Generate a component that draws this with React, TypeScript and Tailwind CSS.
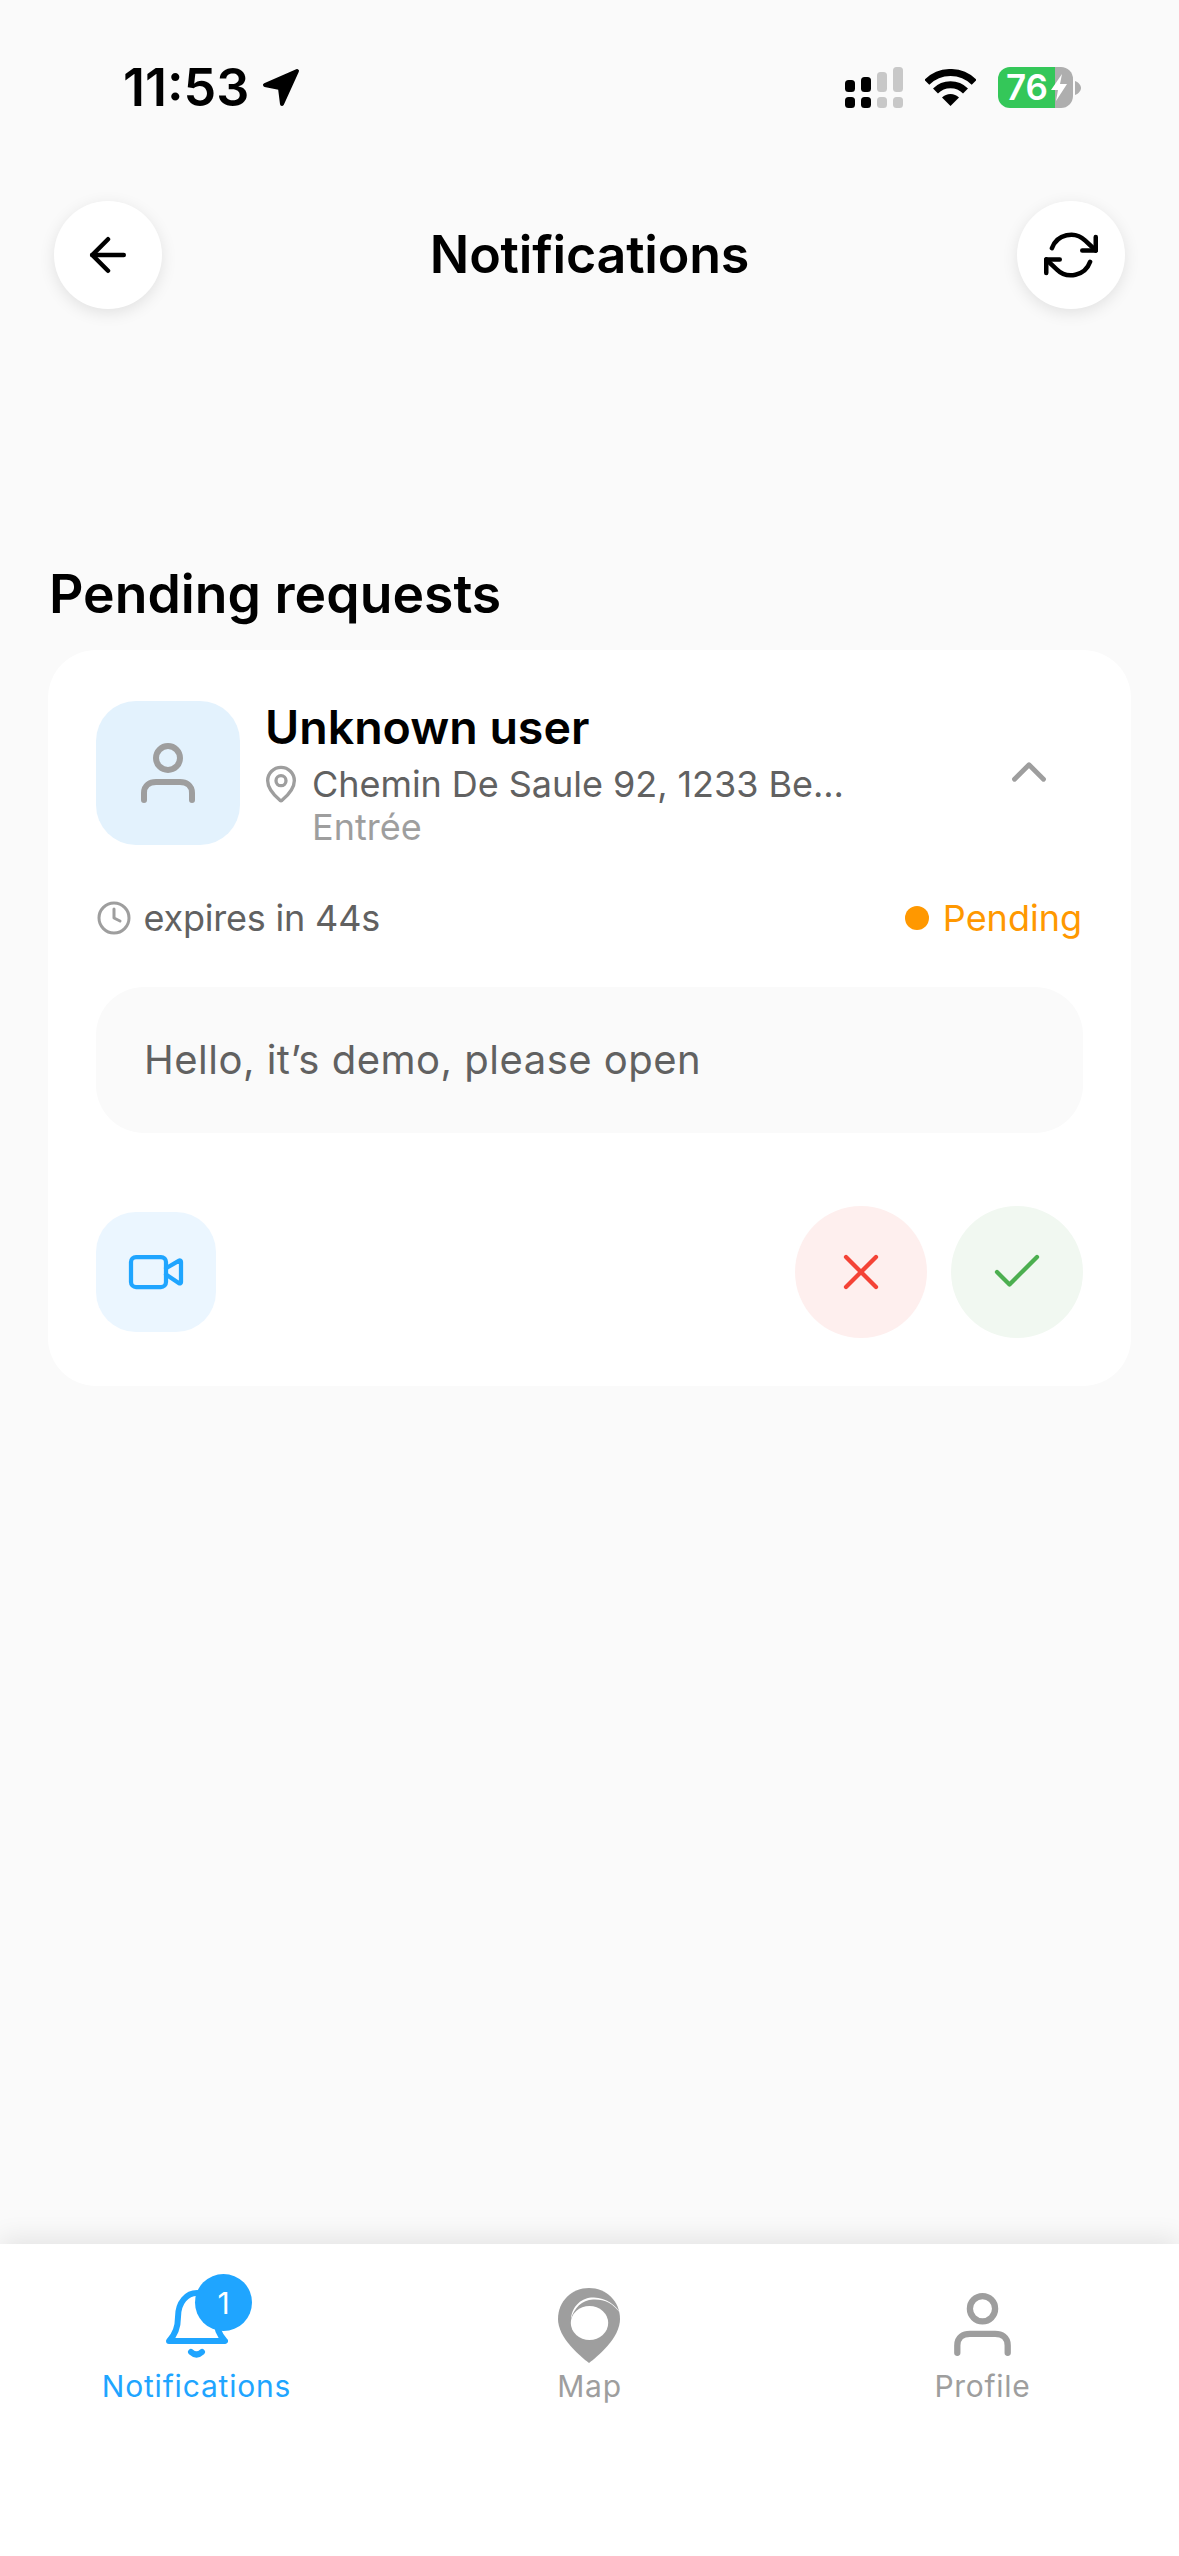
import { ArrowLeft, Check, ChevronUp, Clock, MapPin, Video, X } from 'lucide-react'
import { FiRefreshCw } from 'react-icons/fi'

function PersonIcon({ className }: { className: string }) {
  return (
    <svg viewBox="0 0 54 60" fill="none" stroke="currentColor" strokeWidth="6" strokeLinecap="round" className={className}>
      <circle cx="27" cy="15" r="12" />
      <path d="M3 57V50C3 42 9 39 15 39H39C45 39 51 42 51 50V57" />
    </svg>
  )
}

function StatusBar() {
  return (
    <div className="flex items-center justify-between pt-[67px] pl-[123px] pr-[98px] h-[108px]">
      <div className="flex items-center gap-[13px]">
        <span className="text-[52px] leading-[41px] font-semibold text-black">11:53</span>
        <svg viewBox="0 0 38 39" className="w-[38px] h-[39px]">
          <path d="M35 3 L3 17 L18 20 L20 36 Z" fill="#000" stroke="#000" strokeWidth="4" strokeLinejoin="round" />
        </svg>
      </div>
      <div className="flex items-center">
        <svg viewBox="0 0 58 41" className="w-[58px] h-[41px]">
          <rect x="0" y="13" width="10" height="12" rx="3.5" fill="#000" />
          <rect x="16" y="10" width="10" height="15" rx="3.5" fill="#000" />
          <rect x="32" y="5" width="10" height="20" rx="3.5" fill="#c8c8c8" />
          <rect x="48" y="0" width="10" height="25" rx="3.5" fill="#c8c8c8" />
          <rect x="0" y="30" width="10" height="11" rx="3.5" fill="#000" />
          <rect x="16" y="30" width="10" height="11" rx="3.5" fill="#000" />
          <rect x="32" y="30" width="10" height="11" rx="3.5" fill="#c8c8c8" />
          <rect x="48" y="30" width="10" height="11" rx="3.5" fill="#c8c8c8" />
        </svg>
        <svg viewBox="0 0 51 37" className="w-[51px] h-[37px] ml-[22px]" fill="none" stroke="#000" strokeWidth="7">
          <path d="M1.8 13.3A33.5 33.5 0 0 1 49.2 13.3" />
          <path d="M10.5 22A21.25 21.25 0 0 1 40.5 22" />
          <path d="M25.5 37L17 28.5A12 12 0 0 1 34 28.5Z" fill="#000" stroke="none" />
        </svg>
        <div className="relative flex w-[75px] h-[41px] ml-[22px]">
          <div className="h-full w-[57px] rounded-l-[12px] bg-[#34c759]" />
          <div className="h-full w-[18px] rounded-r-[12px] bg-[#aeaeae]" />
          <span className="absolute left-[8px] top-0 text-[35px] leading-[41px] font-semibold text-white">76</span>
          <svg viewBox="0 0 16 27" className="absolute left-[53px] top-[7px] w-[16px] h-[27px]">
            <path d="M11 0L0 16H7L5 27L16 10H9Z" fill="#fff" />
          </svg>
        </div>
        <svg viewBox="0 0 6 14" className="w-[6px] h-[14px] ml-[2px]">
          <path d="M0 0C3 1 6 4 6 7C6 10 3 13 0 14Z" fill="#aeaeae" />
        </svg>
      </div>
    </div>
  )
}

function RoundButton({ children }: { children: React.ReactNode }) {
  return (
    <button className="w-[108px] h-[108px] rounded-full bg-white flex items-center justify-center text-black shadow-[0_4px_16px_rgba(0,0,0,0.1)]">
      {children}
    </button>
  )
}

function RequestCard() {
  return (
    <div className="mx-[48px] h-[736px] rounded-[48px] bg-white px-[48px] pt-[51px]">
      <div className="flex">
        <div className="w-[144px] h-[144px] shrink-0 rounded-[40px] bg-[#e3f2fd] flex items-center justify-center text-[#9e9e9e]">
          <PersonIcon className="w-[54px] h-[60px]" />
        </div>
        <div className="ml-[25px] flex-1 min-w-0 pt-[2px]">
          <div className="text-[46.5px] leading-[48px] font-semibold text-black">Unknown user</div>
          <div className="flex items-center mt-[11px] h-[44px]">
            <MapPin size={40} strokeWidth={2} className="shrink-0 text-[#9e9e9e] -ml-[4px]" />
            <span className="ml-[11px] whitespace-nowrap text-[36px] leading-[44px] tracking-[-0.05px] text-[#616161]">Chemin De Saule 92, 1233 Be...</span>
          </div>
          <div className="ml-[47px] mt-[1px] text-[36px] leading-[40px] text-[#9e9e9e]">Entrée</div>
        </div>
        <ChevronUp size={58} strokeWidth={2} className="shrink-0 text-[#9e9e9e] mr-[25px] mt-[42px]" />
      </div>

      <div className="flex items-center justify-between mt-[47px] h-[48px]">
        <div className="flex items-center">
          <Clock size={36} strokeWidth={2} className="text-[#9e9e9e] -ml-[0.5px]" />
          <span className="ml-[12px] text-[36px] leading-[48px] tracking-[-0.2px] text-[#616161]">expires in 44s</span>
        </div>
        <div className="flex items-center mr-[1px]">
          <span className="w-[24px] h-[24px] rounded-full bg-[#ff9800]" />
          <span className="ml-[14px] text-[36px] leading-[48px] text-[#ff9800]">Pending</span>
        </div>
      </div>

      <div className="mt-[45px] h-[146px] rounded-[48px] bg-[#fafafa] flex items-center pl-[48px]">
        <span className="text-[40px] leading-[48px] tracking-[0.5px] text-[#616161]">Hello, it’s demo, please open</span>
      </div>

      <div className="flex items-center justify-between mt-[73px]">
        <button className="w-[120px] h-[120px] rounded-[40px] bg-[#ebf6ff] flex items-center justify-center">
          <Video size={60} strokeWidth={1.7} className="text-[#1fa5ff]" />
        </button>
        <div className="flex gap-[24px]">
          <button className="w-[132px] h-[132px] rounded-full bg-[#feefee] flex items-center justify-center">
            <X size={60} strokeWidth={1.7} className="text-[#f44336]" />
          </button>
          <button className="w-[132px] h-[132px] rounded-full bg-[#f1f8f1] flex items-center justify-center">
            <Check size={60} strokeWidth={1.7} className="text-[#4caf50]" />
          </button>
        </div>
      </div>
    </div>
  )
}

function TabBar() {
  return (
    <div className="h-[312px] bg-white grid grid-cols-3 shadow-[0_-6px_24px_rgba(0,0,0,0.09)]">
      <div className="flex flex-col items-center text-[#1fa5ff]">
        <div className="h-[124px] flex items-end pb-[10px]">
          <div className="relative w-[63px] h-[68px]">
            <svg viewBox="0 0 63 68" fill="none" stroke="currentColor" strokeWidth="6" strokeLinecap="round" strokeLinejoin="round" className="w-[63px] h-[68px]">
              <path d="M4 51C9 46 13 38 13 27C13 12 22 3 32 3C42 3 51 12 51 27C51 38 55 46 60 51Z" />
              <path d="M26 62Q31.5 67 37 62" />
            </svg>
            <span className="absolute left-[30px] top-[-16px] w-[57px] h-[57px] rounded-full bg-[#1fa5ff] flex items-center justify-center text-[30px] leading-none text-white">1</span>
          </div>
        </div>
        <span className="text-[30px] leading-[36px] tracking-[0.8px]">Notifications</span>
      </div>
      <div className="flex flex-col items-center text-[#9e9e9e]">
        <div className="h-[124px] flex items-end pb-[5px]">
          <svg viewBox="0 0 63 75" className="w-[63px] h-[75px]">
            <path d="M31 75C22 68 0 50 0 31C0 13 14 0 31 0C48 0 62 13 62 31C62 50 40 68 31 75Z" fill="currentColor" />
            <ellipse cx="31.5" cy="35" rx="18.7" ry="17" fill="#fff" />
            <path d="M13 31C14 17 25 9 36 9.5C48 10 58 17 63 26C55 15 46 11 35 11.5C24 12 16 20 13 31Z" fill="#fff" />
          </svg>
        </div>
        <span className="text-[30px] leading-[36px] tracking-[0.7px]">Map</span>
      </div>
      <div className="flex flex-col items-center text-[#9e9e9e]">
        <div className="h-[124px] flex items-end pb-[12px]">
          <PersonIcon className="w-[57px] h-[63px]" />
        </div>
        <span className="text-[30px] leading-[36px] tracking-[0.7px]">Profile</span>
      </div>
    </div>
  )
}

export default function App() {
  return (
    <div className="w-[1179px] h-[2556px] bg-[#fafafa] flex flex-col overflow-hidden font-['Inter',sans-serif]">
      <StatusBar />

      {/* Header */}
      <div className="flex items-center justify-between mt-[93px] px-[54px]">
        <RoundButton>
          <ArrowLeft size={54} strokeWidth={2} />
        </RoundButton>
        <h1 className="text-[52px] leading-[60px] font-semibold tracking-[-0.2px] text-black">Notifications</h1>
        <RoundButton>
          <FiRefreshCw size={54} />
        </RoundButton>
      </div>

      <h2 className="mt-[255px] mb-[26px] ml-[49px] text-[53.5px] leading-[60px] font-semibold text-black">Pending requests</h2>

      <RequestCard />

      <div className="flex-1" />
      <TabBar />
    </div>
  )
}
